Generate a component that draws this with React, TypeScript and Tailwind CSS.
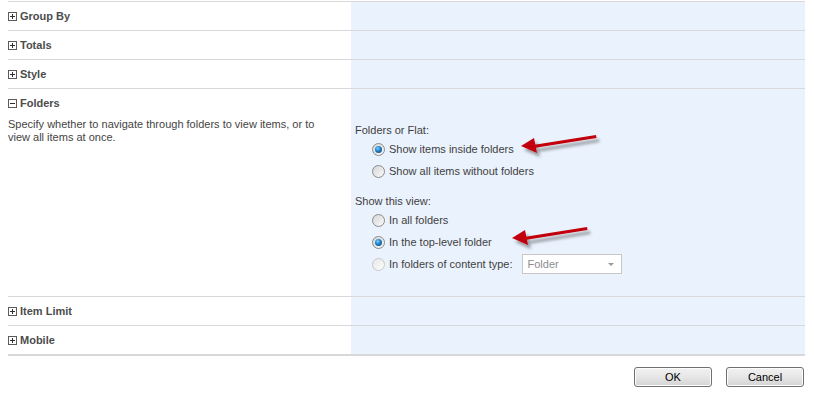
import React from "react";

const sections = ["Group By", "Totals", "Style"];
const sectionsAfter = ["Item Limit", "Mobile"];

function ToggleIcon({ open }: { open?: boolean }) {
  return (
    <svg width="9" height="9" viewBox="0 0 9 9" className="shrink-0">
      <rect x="0.5" y="0.5" width="8" height="8" fill="#fff" stroke="#5b5b5b" />
      <path d="M2 4.5h5" stroke="#2f2f2f" strokeWidth="1" />
      {!open && <path d="M4.5 2v5" stroke="#2f2f2f" strokeWidth="1" />}
    </svg>
  );
}

function SectionTitle({ label, open }: { label: string; open?: boolean }) {
  return (
    <div className="h-[28px] flex items-center gap-[3px]">
      <ToggleIcon open={open} />
      <span className="text-[11px] font-bold text-[#4c4c4c]">{label}</span>
    </div>
  );
}

function CollapsedRow({ label }: { label: string }) {
  return (
    <div className="grid grid-cols-[343px_454px] border-t border-[#d8d8d8]">
      <SectionTitle label={label} />
      <div className="bg-[#eaf2fd]" />
    </div>
  );
}

function Radio({ checked, disabled }: { checked?: boolean; disabled?: boolean }) {
  return (
    <span
      className={
        "relative w-[13px] h-[13px] rounded-full border shrink-0 flex items-center justify-center " +
        (disabled
          ? "border-[#c9c9c9] bg-gradient-to-br from-[#e8e8e8] to-[#fbfbfb]"
          : "border-[#8a8a8a] bg-gradient-to-br from-[#d6d6d6] to-[#fafafa]")
      }
    >
      {checked && (
        <span className="w-[7px] h-[7px] rounded-full bg-[radial-gradient(circle_at_40%_35%,#7fd2ff_0%,#1c7dc8_45%,#0b3e78_100%)]" />
      )}
    </span>
  );
}

function RadioRow({
  label,
  checked,
  disabled,
  children,
}: {
  label: string;
  checked?: boolean;
  disabled?: boolean;
  children?: React.ReactNode;
}) {
  return (
    <div className="h-[22px] flex items-center pl-[17px]">
      <Radio checked={checked} disabled={disabled} />
      <span className="ml-[4px]">{label}</span>
      {children}
    </div>
  );
}

function Arrow({ x, y }: { x: number; y: number }) {
  return (
    <g transform={`translate(${x} ${y})`} filter="url(#arrowShadow)">
      <path d="M12 -1 L75 -11 L75.5 -8 L13 2 Z" fill="#c2000a" />
      <path d="M0 0 L13 -8 L16 7 Z" fill="#c2000a" />
    </g>
  );
}

export default function App() {
  return (
    <div
      className="relative w-[814px] h-[399px] bg-white text-[#444]"
      style={{ fontFamily: '"Liberation Sans", Arial, sans-serif' }}
    >
      <div className="ml-2 w-[797px] pt-px">
        {sections.map((s) => (
          <CollapsedRow key={s} label={s} />
        ))}

        <div className="grid grid-cols-[343px_454px] border-t border-[#d8d8d8] h-[208px]">
          <div>
            <SectionTitle label="Folders" open />
            <p className="mt-px text-[11px] leading-[13px] text-[#444]">
              Specify whether to navigate through folders to view items, or to
              <br />
              view all items at once.
            </p>
          </div>
          <div className="bg-[#eaf2fd] pl-1 pt-[33px] text-[11px] text-[#3f3f3f]">
            <div className="h-[16px] leading-[16px]">Folders or Flat:</div>
            <RadioRow label="Show items inside folders" checked />
            <RadioRow label="Show all items without folders" />
            <div className="mt-[11px] h-[16px] leading-[16px]">Show this view:</div>
            <RadioRow label="In all folders" />
            <RadioRow label="In the top-level folder" checked />
            <RadioRow label="In folders of content type:" disabled>
              <div className="ml-[9px] w-[100px] h-[20px] border border-[#c8c8c8] bg-white flex items-center justify-between pl-[5px] pr-[7px] text-[#8d8d8d]">
                <span>Folder</span>
                <span className="w-0 h-0 border-l-[3px] border-r-[3px] border-t-[3px] border-l-transparent border-r-transparent border-t-[#9a9a9a]" />
              </div>
            </RadioRow>
          </div>
        </div>

        {sectionsAfter.map((s) => (
          <CollapsedRow key={s} label={s} />
        ))}
        <div className="border-t-2 border-[#d8d8d8]" />

        <div className="flex justify-end gap-[14px] mt-[11px] pr-px">
          {["OK", "Cancel"].map((b) => (
            <button
              key={b}
              className="w-[78px] h-[20px] rounded-[3px] border border-[#707070] bg-gradient-to-b from-[#f2f2f2] via-[#e6e6e6] to-[#d4d4d4] text-[11px] text-black shadow-[inset_0_0_0_1px_#fcfcfc]"
            >
              {b}
            </button>
          ))}
        </div>
      </div>

      <svg className="absolute inset-0 pointer-events-none" width="814" height="399">
        <defs>
          <filter id="arrowShadow" x="-20%" y="-50%" width="140%" height="250%">
            <feDropShadow dx="3" dy="4" stdDeviation="1.6" floodColor="#000" floodOpacity="0.35" />
          </filter>
        </defs>
        <Arrow x={521} y={146} />
        <Arrow x={512} y={238} />
      </svg>
    </div>
  );
}
